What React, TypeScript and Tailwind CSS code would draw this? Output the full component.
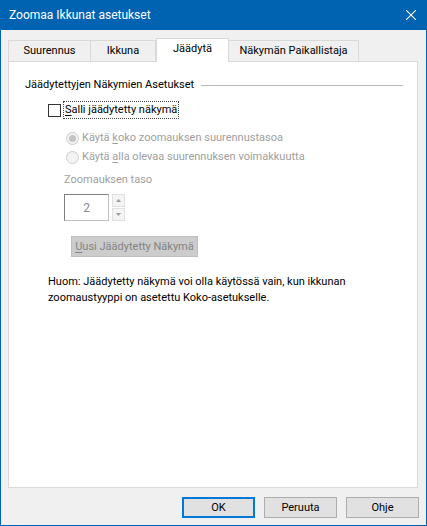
import React from "react";

const font = { fontFamily: 'Roboto, "Liberation Sans", sans-serif' };

function Radio({ checked }: { checked?: boolean }) {
  return (
    <svg width="13" height="13" viewBox="0 0 13 13" className="shrink-0">
      <circle cx="6.5" cy="6.5" r="6" fill="#f3f3f3" stroke="#cccccc" />
      {checked && <circle cx="6.5" cy="6.5" r="3.5" fill="#c4c4c4" />}
    </svg>
  );
}

function Tab({ label, width, selected }: { label: string; width: string; selected?: boolean }) {
  if (selected) {
    return (
      <div
        className={`${width} relative z-10 -mb-px flex h-[24px] items-start justify-center border-x border-t border-[#d9d9d9] bg-white pt-[2px]`}
      >
        {label}
      </div>
    );
  }
  return (
    <div
      className={`${width} flex h-[21px] items-center justify-center border-t border-r border-[#d9d9d9] bg-[#f0f0f0] first:border-l`}
    >
      {label}
    </div>
  );
}

function DialogButton({ label, primary }: { label: string; primary?: boolean }) {
  return (
    <button
      type="button"
      className={`flex h-[21px] w-[73px] items-center justify-center bg-[#e1e1e1] text-black ${
        primary ? "border-2 border-[#0078d7]" : "border border-[#adadad]"
      }`}
    >
      {label}
    </button>
  );
}

export default function App() {
  return (
    <div
      style={font}
      className="flex h-[526px] w-[427px] flex-col border-x border-b border-[#0063b1] bg-[#f0f0f0] text-[11px] leading-[16px] text-black"
    >
      {/* title bar */}
      <div className="flex h-[30px] shrink-0 items-center justify-between bg-[#0063b1] pl-[8px] pr-[10px] text-[12px] text-white">
        <span>Zoomaa Ikkunat asetukset</span>
        <svg width="10" height="10" viewBox="0 0 10 10">
          <path d="M0 0L10 10M10 0L0 10" stroke="white" strokeWidth="1.1" />
        </svg>
      </div>

      {/* tabs */}
      <div className="ml-[7px] mt-[8px] flex h-[23px] items-end">
        <Tab label="Suurennus" width="w-[83px]" />
        <Tab label="Ikkuna" width="w-[65px]" />
        <Tab label="Jäädytä" width="w-[73px]" selected />
        <Tab label="Näkymän Paikallistaja" width="w-[130px]" />
      </div>

      {/* panel */}
      <div className="ml-[7px] flex h-[427px] w-[410px] flex-col border border-[#d9d9d9] bg-white pl-[16px] pr-[14px] pt-[15px]">
        <div className="flex items-center gap-[7px]">
          <span>Jäädytettyjen Näkymien Asetukset</span>
          <div className="h-px flex-1 bg-[#b8b8b8]" />
        </div>

        <div className="ml-[23px] mt-[8px] flex items-center gap-[2px]">
          <div className="h-[13px] w-[13px] border border-[#333333] bg-white" />
          <span className="border border-dotted border-[#444444] px-[1px]">
            <span className="underline underline-offset-2">S</span>alli jäädytetty näkymä
          </span>
        </div>

        <div className="ml-[41px] mt-[11px] flex flex-col gap-[3px] text-[#a0a0a0]">
          <div className="flex h-[16px] items-center gap-[3px]">
            <Radio checked />
            <span>
              Käytä <span className="underline underline-offset-2">k</span>oko zoomauksen suurennustasoa
            </span>
          </div>
          <div className="flex h-[16px] items-center gap-[3px]">
            <Radio />
            <span>
              Käytä <span className="underline underline-offset-2">a</span>lla olevaa suurennuksen voimakkuutta
            </span>
          </div>
        </div>

        <div className="ml-[39px] mt-[7px] text-[#a0a0a0]">Zoomauksen taso</div>

        <div className="ml-[39px] mt-[6px] flex items-stretch gap-[3px]">
          <div className="flex h-[27px] w-[45px] items-center justify-center border border-[#bfbfbf] border-l-[#808080] border-t-[#808080] bg-white text-[12px] text-[#8a8a8a]">
            2
          </div>
          <div className="flex w-[13px] flex-col gap-px">
            <div className="flex flex-1 items-center justify-center border border-[#e0e0e0] bg-[#f4f4f4]">
              <svg width="5" height="3" viewBox="0 0 5 3">
                <path d="M2.5 0L5 3H0Z" fill="#9a9a9a" />
              </svg>
            </div>
            <div className="flex flex-1 items-center justify-center border border-[#e0e0e0] bg-[#f4f4f4]">
              <svg width="5" height="3" viewBox="0 0 5 3">
                <path d="M0 0H5L2.5 3Z" fill="#9a9a9a" />
              </svg>
            </div>
          </div>
        </div>

        <div className="ml-[46px] mt-[15px]">
          <div className="flex h-[21px] w-[127px] items-center justify-center whitespace-nowrap border border-[#bfbfbf] bg-[#cccccc] text-[#838383]">
            <span>
              <span className="underline underline-offset-2">U</span>usi Jäädytetty Näkymä
            </span>
          </div>
        </div>

        <div className="ml-[23px] mt-[17px]">
          Huom: Jäädytetty näkymä voi olla käytössä vain, kun ikkunan
          <br />
          zoomaustyyppi on asetettu Koko-asetukselle.
        </div>
      </div>

      {/* buttons */}
      <div className="mr-[7px] mt-[9px] flex justify-end gap-[9px]">
        <DialogButton label="OK" primary />
        <DialogButton label="Peruuta" />
        <DialogButton label="Ohje" />
      </div>
    </div>
  );
}
